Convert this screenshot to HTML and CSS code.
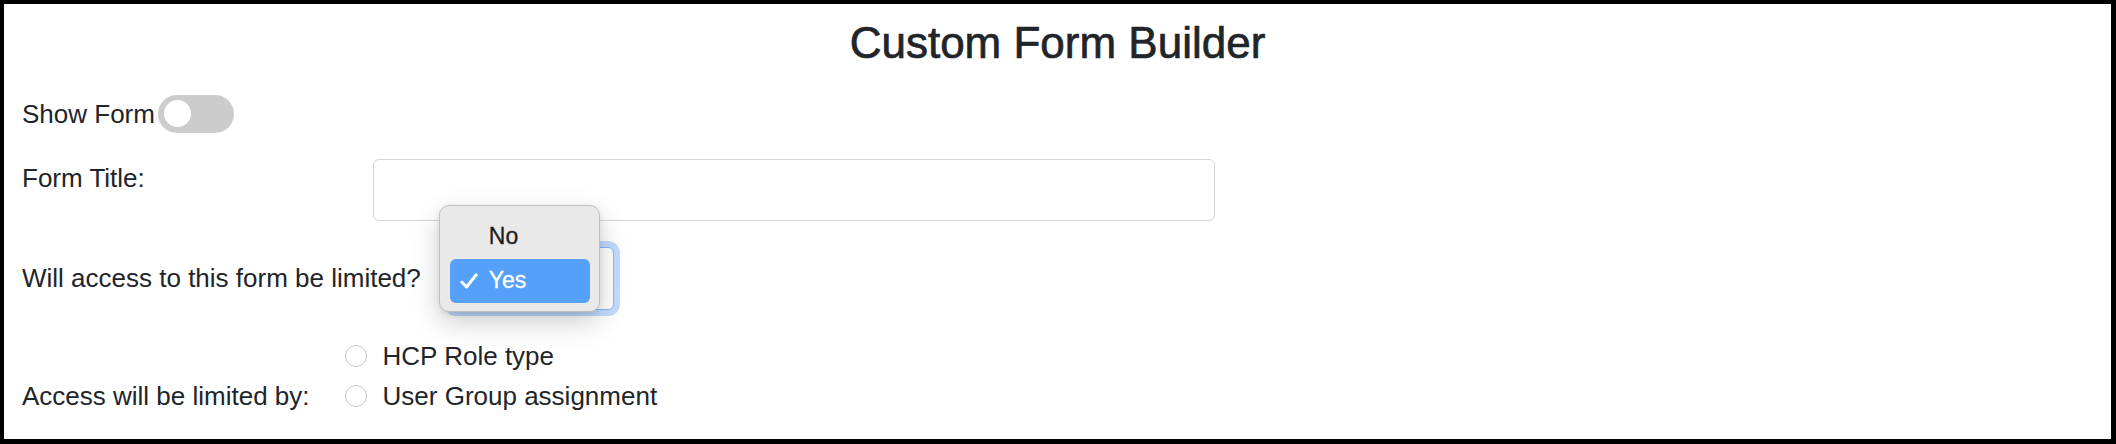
FILE: index.html
```html
<!DOCTYPE html>
<html lang="en">
<head>
<meta charset="utf-8">
<title>Custom Form Builder</title>
<link rel="stylesheet" href="styles.css">
</head>
<body>
<div class="frame">
  <h1 class="title">Custom Form Builder</h1>

  <div class="switch-row">
    <span class="switch-label">Show Form</span>
    <span class="toggle"><span class="knob"></span></span>
  </div>

  <div class="field-row">
    <label class="label label-col" for="formTitle">Form Title:</label>
    <input id="formTitle" class="text-input" type="text">
  </div>

  <div class="field-row center">
    <label class="label" for="limited">Will access to this form be limited?</label>
    <div class="select-wrap">
      <select id="limited" class="select">
        <option>No</option>
        <option selected>Yes</option>
      </select>
      <div class="popup">
        <div class="popup-item">No</div>
        <div class="popup-item active">
          <svg class="check" width="18" height="16" viewBox="0 0 18 16"><polyline points="1.8,9 6.5,14 16.2,1.8" fill="none" stroke="#fff" stroke-width="3" stroke-linecap="round" stroke-linejoin="round"/></svg>
          <span>Yes</span>
        </div>
      </div>
    </div>
  </div>

  <div class="field-row end">
    <span class="label">Access will be limited by:</span>
    <div class="radios">
      <label class="radio"><span class="radio-dot"></span>HCP Role type</label>
      <label class="radio"><span class="radio-dot"></span>User Group assignment</label>
    </div>
  </div>
</div>
</body>
</html>
```

FILE: styles.css
```css
html, body {
  margin: 0;
  padding: 0;
  background: #fff;
}

body {
  font-family: "Liberation Sans", Arial, sans-serif;
  color: #212529;
  font-size: 26px;
}

.frame {
  box-sizing: border-box;
  width: 2116px;
  height: 444px;
  border-style: solid;
  border-color: #000;
  border-width: 4px 5px 5px 4px;
  padding: 13px 18px 0 18px;
  overflow: hidden;
}

.title {
  margin: 0 0 25px 0;
  font-size: 44px;
  font-weight: 400;
  line-height: 52.8px;
  text-align: center;
  color: #212529;
  -webkit-text-stroke: 0.7px #212529;
}

.switch-row {
  display: flex;
  align-items: center;
  height: 38px;
  margin-bottom: 26px;
}

.switch-label {
  line-height: 38px;
}

.toggle {
  box-sizing: border-box;
  display: flex;
  align-items: center;
  width: 76px;
  height: 38px;
  margin-left: 3px;
  padding-left: 6px;
  border-radius: 19px;
  background: #cccccc;
}

.knob {
  width: 27px;
  height: 27px;
  border-radius: 50%;
  background: #fff;
}

.field-row {
  display: flex;
  align-items: flex-start;
  margin-bottom: 26px;
}

.field-row.center {
  align-items: center;
}

.field-row.end {
  align-items: flex-end;
}

.label {
  line-height: 39px;
}

.label-col {
  width: 351px;
  flex: none;
}

.text-input {
  box-sizing: border-box;
  width: 842px;
  height: 62px;
  border: 1px solid #d4d7db;
  border-radius: 6px;
  background: #fff;
  font: inherit;
  outline: none;
  margin: 0;
}

.select-wrap {
  position: relative;
  margin-left: 29px;
}

.select {
  box-sizing: border-box;
  display: block;
  width: 164px;
  height: 63px;
  margin: 0;
  padding: 0 40px 0 19px;
  border: 1.5px solid #86b7fe;
  border-radius: 6px;
  background: #fff;
  box-shadow: 0 0 0 6px rgba(13, 110, 253, 0.25);
  font: inherit;
  color: #212529;
  appearance: none;
  -webkit-appearance: none;
  outline: none;
}

.popup {
  position: absolute;
  left: -11px;
  top: -42px;
  box-sizing: border-box;
  width: 161px;
  height: 107px;
  padding: 9px 9px 8px 10px;
  border: 1px solid #bfbfbf;
  border-radius: 10px;
  background: #e9e9e9;
  box-shadow: 0 10px 28px rgba(0, 0, 0, 0.2), 0 2px 6px rgba(0, 0, 0, 0.08);
  font-size: 23px;
  color: #1d1d1f;
  -webkit-text-stroke: 0.3px currentColor;
}

.popup-item {
  display: flex;
  align-items: center;
  height: 44px;
  padding-left: 39px;
  border-radius: 6px;
}

.popup-item.active {
  padding-left: 10px;
  background: #54a0fb;
  color: #fff;
}

.check {
  flex: none;
  margin-right: 11px;
}

.radios {
  display: flex;
  flex-direction: column;
  margin-left: 35px;
}

.radio {
  display: flex;
  align-items: center;
  height: 40px;
  line-height: 40px;
}

.radio-dot {
  box-sizing: border-box;
  width: 22px;
  height: 22px;
  margin-right: 16px;
  border: 1px solid #c4c6c9;
  border-radius: 50%;
  background: #fff;
}
```
